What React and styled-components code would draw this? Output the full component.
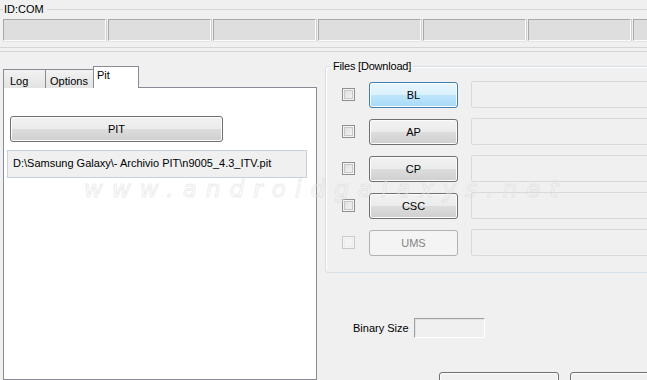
import styled, { createGlobalStyle, css } from 'styled-components'

const GlobalStyle = createGlobalStyle`
  html, body {
    margin: 0;
    padding: 0;
    background: #f0f0f0;
    overflow: hidden;
  }
  body {
    font-family: "Liberation Sans", Arial, sans-serif;
    font-size: 11px;
    color: #000;
  }
`

const fileRows = [
  { name: 'BL', hover: true },
  { name: 'AP' },
  { name: 'CP' },
  { name: 'CSC' },
  { name: 'UMS', disabled: true },
]

const tabs = [
  { label: 'Log', width: 43, pad: 6 },
  { label: 'Options', width: 49, pad: 4 },
  { label: 'Pit', width: 46, pad: 3, active: true },
]

const App = () => {
  return (
    <Window>
      <GlobalStyle />
      <ComGroup>
        <legend>ID:COM</legend>
        <ComRow>
          {Array.from({ length: 8 }).map((_, i) => (
            <ComBox key={i} />
          ))}
        </ComRow>
      </ComGroup>
      <Divider />

      <Main>
        <LeftColumn>
          <TabStrip>
            {tabs.map((t) => (
              <Tab key={t.label} $w={t.width} $pad={t.pad} $active={t.active}>
                {t.label}
              </Tab>
            ))}
          </TabStrip>
          <TabPanel>
            <WinButton $wide>PIT</WinButton>
            <PathBox>D:\Samsung Galaxy\- Archivio PIT\n9005_4.3_ITV.pit</PathBox>
          </TabPanel>
        </LeftColumn>

        <RightColumn>
          <FilesGroup>
            <legend>Files [Download]</legend>
            {fileRows.map((row) => (
              <FileRow key={row.name}>
                <CheckBox $disabled={row.disabled} />
                <WinButton $hover={row.hover} $disabled={row.disabled}>
                  {row.name}
                </WinButton>
                <FileField />
              </FileRow>
            ))}
          </FilesGroup>

          <BinaryRow>
            <span>Binary Size</span>
            <SunkenBox />
          </BinaryRow>
          <Separator />
          <ActionRow>
            <ActionButton />
            <ActionButton />
          </ActionRow>
        </RightColumn>
      </Main>

      <Watermark>www.androidgalaxys.net</Watermark>
    </Window>
  )
}

export default App

const Window = styled.div`
  position: relative;
  width: 647px;
  height: 380px;
  overflow: hidden;
  display: flex;
  flex-direction: column;
`

const ComGroup = styled.fieldset`
  margin: 3px 0 0 0;
  padding: 3px 0 6px 3px;
  border: none;
  border-top: 1px solid #d6d6d6;
  border-bottom: 1px solid #d6d6d6;
  min-width: 0;
  overflow: hidden;

  legend {
    padding: 0 3px 0 1px;
    line-height: 13px;
  }
`

const ComRow = styled.div`
  display: flex;
  gap: 2px;
`

const ComBox = styled.div`
  flex: none;
  width: 101px;
  height: 20px;
  background: #dedede;
  border: 1px solid #a9a9a9;
  border-right-color: #fbfbfb;
  border-bottom-color: #fbfbfb;
  box-shadow: 1px 0 0 #cfcfcf, 0 1px 0 #e4e4e4;
`

const Divider = styled.div`
  margin-top: 3px;
  height: 1px;
  background: #d6d6d6;
`

const Main = styled.div`
  flex: 1;
  display: flex;
  padding-left: 3px;
  min-height: 0;
`

const LeftColumn = styled.div`
  width: 314px;
  flex: none;
  display: flex;
  flex-direction: column;
  padding-top: 15px;
`

const TabStrip = styled.div`
  display: flex;
  align-items: flex-end;
  height: 21px;
  margin-bottom: -1px;
  position: relative;
  z-index: 1;
`

const Tab = styled.div`
  box-sizing: border-box;
  width: ${(p) => p.$w}px;
  height: 19px;
  padding: 5px 0 0 ${(p) => p.$pad}px;
  border: 1px solid #898c95;
  border-bottom: none;
  margin-right: -1px;
  background: linear-gradient(#f2f2f2, #e3e3e3);
  line-height: 12px;
  flex: none;

  ${(p) =>
    p.$active &&
    css`
      height: 22px;
      padding-top: 2px;
      background: #fff;
    `}
`

const TabPanel = styled.div`
  flex: 1;
  background: #fff;
  border: 1px solid #898c95;
  padding: 28px 0 0 3px;
  display: flex;
  flex-direction: column;
  align-items: flex-start;
`

const WinButton = styled.div`
  box-sizing: border-box;
  width: ${(p) => (p.$wide ? '213px' : '89px')};
  height: 26px;
  margin-left: ${(p) => (p.$wide ? '3px' : '0')};
  display: flex;
  align-items: center;
  justify-content: center;
  border: 1px solid #707070;
  border-radius: 3px;
  background: linear-gradient(#f2f2f2 0%, #ebebeb 50%, #dddddd 51%, #cfcfcf 100%);
  box-shadow: inset 0 0 0 1px #fcfcfc;
  flex: none;

  ${(p) =>
    p.$hover &&
    css`
      border-color: #3c7fb1;
      background: linear-gradient(#eaf6fd 0%, #d9f0fc 50%, #bee6fd 51%, #a7d9f5 100%);
    `}

  ${(p) =>
    p.$disabled &&
    css`
      border-color: #adb2b5;
      background: #f4f4f4;
      color: #838383;
      box-shadow: none;
    `}
`

const PathBox = styled.div`
  box-sizing: border-box;
  width: 300px;
  height: 28px;
  margin-top: 8px;
  padding: 6px 0 0 5px;
  background: #f0f0f0;
  border: 1px solid #c5d1dc;
  line-height: 13px;
  white-space: nowrap;
`

const RightColumn = styled.div`
  flex: 1;
  margin-left: 8px;
  display: flex;
  flex-direction: column;
  min-width: 0;
`

const FilesGroup = styled.fieldset`
  margin: 8px -20px 0 0;
  padding: 8px 0 16px 16px;
  border: 1px solid #d5dfe5;
  border-radius: 3px;
  box-shadow: inset 1px 1px 0 #fff;
  display: flex;
  flex-direction: column;
  gap: 10px;
  min-width: 0;

  legend {
    margin-left: -10px;
    padding: 0 2px 0 1px;
    line-height: 13px;
    letter-spacing: -0.2px;
  }
`

const FileRow = styled.div`
  display: flex;
  align-items: center;
  height: 27px;
`

const CheckBox = styled.div`
  box-sizing: border-box;
  width: 13px;
  height: 13px;
  margin-right: 14px;
  border: 1px solid ${(p) => (p.$disabled ? '#c9c9c9' : '#8f8f8f')};
  background: ${(p) =>
    p.$disabled ? '#f4f4f4' : 'linear-gradient(135deg, #dcdcdc, #f6f6f6)'};
  box-shadow: inset 0 0 0 1px #f4f4f4,
    inset 0 0 0 2px ${(p) => (p.$disabled ? '#ececec' : '#c8c8c8')};
`

const FileField = styled.div`
  flex: 1;
  box-sizing: border-box;
  height: 27px;
  margin-left: 13px;
  background: #f0f0f0;
  border: 1px solid #d9d9d9;
  border-radius: 2px;
`

const BinaryRow = styled.div`
  display: flex;
  align-items: center;
  gap: 5px;
  margin-top: 45px;
  padding-left: 28px;
`

const SunkenBox = styled.div`
  box-sizing: border-box;
  width: 71px;
  height: 20px;
  border: 1px solid #a0a0a0;
  border-right-color: #fff;
  border-bottom-color: #fff;
  box-shadow: inset 1px 1px 0 #e3e3e3;
`

const Separator = styled.div`
  margin: 20px -10px 0 8px;
  height: 1px;
  background: #a0a0a0;
  box-shadow: 0 1px 0 #fff;
`

const ActionRow = styled.div`
  display: flex;
  gap: 11px;
  margin-top: 14px;
  padding-left: 114px;
`

const ActionButton = styled.div`
  flex: none;
  box-sizing: border-box;
  width: 120px;
  height: 26px;
  border: 1px solid #707070;
  border-radius: 3px;
  background: linear-gradient(#f2f2f2, #ebebeb);
  box-shadow: inset 0 0 0 1px #fcfcfc;
`

const Watermark = styled.div`
  position: absolute;
  left: 84px;
  top: 179px;
  font-family: "DejaVu Sans", sans-serif;
  font-style: italic;
  font-size: 23px;
  line-height: 20px;
  letter-spacing: 9.1px;
  color: rgba(255, 255, 255, 0.35);
  -webkit-text-stroke: 1px rgba(200, 200, 200, 0.35);
  pointer-events: none;
  white-space: nowrap;
`
